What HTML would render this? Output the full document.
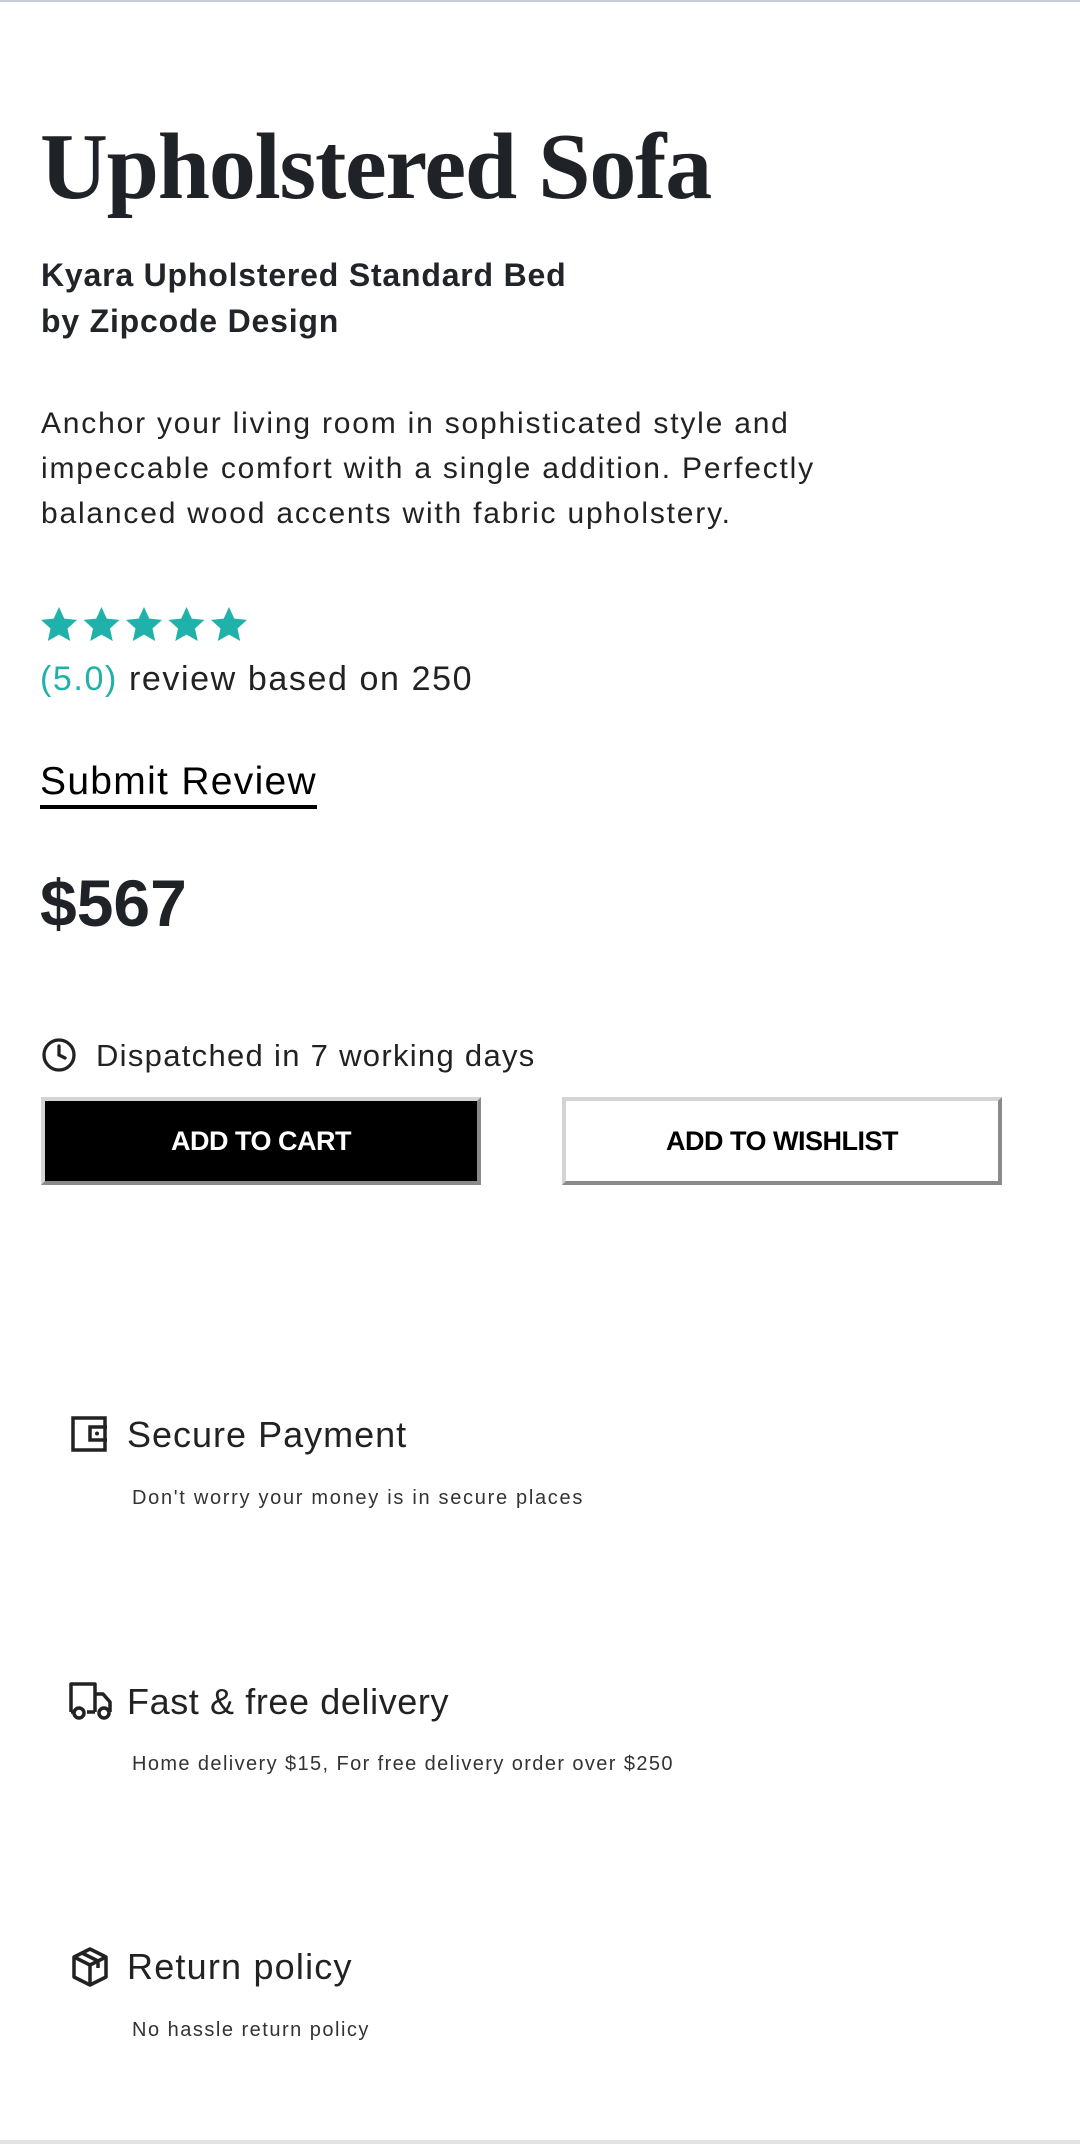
<!DOCTYPE html>
<html><head><meta charset="utf-8"><style>
html,body{margin:0;padding:0;background:#fff;}
body{width:1080px;height:2144px;position:relative;overflow:hidden;font-family:"Liberation Sans",sans-serif;color:#212529;}
.a{position:absolute;white-space:nowrap;}
.topline{position:absolute;left:0;top:0;width:1080px;height:2px;background:#c9ccd3;}
.botline{position:absolute;left:0;bottom:0;width:1080px;height:4px;background:#e2e2e2;}
h1{position:absolute;left:40px;top:112px;margin:0;font-family:"Liberation Serif",serif;font-weight:bold;font-size:94px;line-height:110px;letter-spacing:-1.2px;color:#1f2226;}
.sub{left:41px;top:252px;font-weight:bold;font-size:32px;line-height:46px;letter-spacing:0.8px;}
.desc{left:41px;top:401px;font-size:30px;line-height:45px;color:#222;letter-spacing:1.8px;}
.btn{position:absolute;top:1097px;width:440px;height:88px;box-sizing:border-box;border:4px solid;border-color:#d4d4d4 #8a8a8a #8a8a8a #d4d4d4;font-weight:bold;font-size:27px;display:flex;align-items:center;justify-content:center;letter-spacing:-0.5px;}
.fh{font-size:36px;color:#222;}
.fs{font-size:20px;color:#333;letter-spacing:1.5px;}
</style></head><body>
<div class="topline"></div>
<h1>Upholstered Sofa</h1>
<div class="a sub">Kyara Upholstered Standard Bed<br>by Zipcode Design</div>
<div class="a desc">Anchor your living room in sophisticated style and<br>impeccable comfort with a single addition. Perfectly<br>balanced wood accents with fabric upholstery.</div>
<svg class="a" style="left:40px;top:606px" width="212" height="38" viewBox="0 0 212 38">
<g fill="#20b2aa">
<path id="s" d="M19 1l5.3 11.6 12.7 1.3-9.5 8.6 2.7 12.5L19 28.6 7.8 35l2.7-12.5L1 13.9l12.7-1.3z"/>
<use href="#s" x="42.5"/><use href="#s" x="85"/><use href="#s" x="127.5"/><use href="#s" x="170"/>
</g></svg>
<div class="a" style="left:40px;top:658px;font-size:34px;line-height:42px;color:#222;letter-spacing:1.6px"><span style="color:#20b2aa">(5.0)</span> review based on 250</div>
<div class="a" style="left:40px;top:759px;font-size:39px;line-height:46px;color:#000;letter-spacing:1.3px">Submit Review</div>
<div class="a" style="left:40px;top:805px;width:277px;height:4px;background:#000"></div>
<div class="a" style="left:40px;top:865px;font-size:66px;line-height:76px;font-weight:bold;color:#1f2226">$567</div>
<svg class="a" style="left:41px;top:1037px" width="36" height="36" viewBox="0 0 24 24" fill="none" stroke="#222" stroke-width="2.2" stroke-linecap="round"><circle cx="12" cy="12" r="10"/><path d="M12 6v6l4 2"/></svg>
<div class="a" style="left:96px;top:1036px;font-size:31px;line-height:40px;color:#222;letter-spacing:1.3px">Dispatched in 7 working days</div>
<div class="btn" style="left:41px;background:#000;color:#fff">ADD TO CART</div>
<div class="btn" style="left:562px;background:#fff;color:#000">ADD TO WISHLIST</div>

<svg class="a" style="left:71px;top:1416px" width="38" height="36" viewBox="0 0 38 36" fill="none" stroke="#222" stroke-width="3.5"><path d="M2 2h32v32H2z"/><path d="M36 11H19v13h17"/><circle cx="26" cy="17.5" r="2" fill="#222" stroke="none"/></svg>
<div class="a fh" style="left:127px;top:1414px;letter-spacing:1px">Secure Payment</div>
<div class="a fs" style="left:132px;top:1487px;letter-spacing:1.7px">Don't worry your money is in secure places</div>

<svg class="a" style="left:68px;top:1682px" width="44" height="38" viewBox="0 0 44 38" fill="none" stroke="#222" stroke-width="3.5" stroke-linejoin="round"><path d="M3 30V2h24v28"/><path d="M27 12h8l7 8v10"/><path d="M27 30h-8M3 30h2"/><circle cx="11" cy="31" r="5"/><circle cx="36" cy="31" r="5"/></svg>
<div class="a fh" style="left:127px;top:1681px;letter-spacing:0.6px">Fast &amp; free delivery</div>
<div class="a fs" style="left:132px;top:1753px;letter-spacing:1.4px">Home delivery $15, For free delivery order over $250</div>

<svg class="a" style="left:71px;top:1947px" width="38" height="40" viewBox="0 0 38 40" fill="none" stroke="#222" stroke-width="3.5" stroke-linejoin="round"><path d="M19 2l16 8v20l-16 8-16-8V10z"/><path d="M3 10l16 8 16-8M19 18v20M11 6l16 8v7"/></svg>
<div class="a fh" style="left:127px;top:1946px;letter-spacing:1.2px">Return policy</div>
<div class="a fs" style="left:132px;top:2019px;letter-spacing:1.5px">No hassle return policy</div>
<div class="botline"></div>
</body></html>
